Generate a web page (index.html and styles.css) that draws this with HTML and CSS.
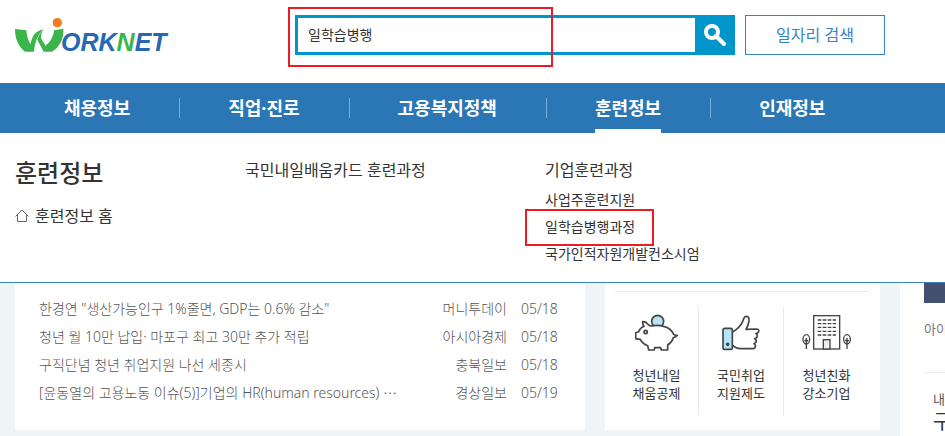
FILE: index.html
```html
<!DOCTYPE html>
<html lang="ko">
<head>
    <meta charset="UTF-8">
    <meta name="viewport" content="width=device-width, initial-scale=1.0">
    <title>WORKNET</title>
    <link rel="stylesheet" href="styles.css">
</head>
<body>
    <header class="header">
        <a href="#" class="logo" aria-label="WORKNET">
            <svg class="logo-mark" viewBox="45 51 147 105" aria-hidden="true">
                <path fill="#3ab54a" d="M45 87L79 91C81 112 86 124 92 133C94 112 106 92 131 88C114 102 104 128 102 155H75C56 140 45 118 45 87Z"/>
                <path fill="#3ab54a" d="M130 92C124 100 122 108 124 116L137 137C151 125 161 110 162 91L190 86C192 115 180 140 156 155H131L112 119C115 107 121 97 130 92Z"/>
                <circle cx="172" cy="68" r="14" fill="#f47b20"/>
            </svg>
            <span class="logo-text">ORK<span class="logo-green">N</span>ET</span>
        </a>
        <form class="search">
            <input type="text" class="search-input" value="일학습병행" aria-label="검색어">
            <button type="submit" class="search-btn" aria-label="검색">
                <svg viewBox="0 0 24 24" width="24" height="24" fill="none" stroke="#fff">
                    <circle cx="9" cy="9" r="6" stroke-width="4"/>
                    <path d="M13 13L21 21" stroke-width="4" stroke-linecap="round"/>
                </svg>
            </button>
            <span class="mark mark-search"></span>
        </form>
        <button type="button" class="job-btn">일자리 검색</button>
    </header>

    <nav class="nav">
        <ul class="nav-list">
            <li><a href="#">채용정보</a></li>
            <li><a href="#">직업·진로</a></li>
            <li><a href="#">고용복지정책</a></li>
            <li><a href="#" class="active">훈련정보</a></li>
            <li><a href="#">인재정보</a></li>
        </ul>
    </nav>

    <section class="submenu">
        <div class="submenu-title">
            <h2>훈련정보</h2>
            <a href="#" class="home-link">
                <svg viewBox="0 0 14 14" width="14" height="14" fill="none" stroke="#666">
                    <path d="M0.500 7.500L7 1L13.500 7.500M2.500 6V12.500H11.500V6"/>
                </svg>
                훈련정보 홈
            </a>
        </div>
        <div class="submenu-col">
            <h3><a href="#">국민내일배움카드 훈련과정</a></h3>
        </div>
        <div class="submenu-col">
            <h3><a href="#">기업훈련과정</a></h3>
            <ul>
                <li><a href="#">사업주훈련지원</a></li>
                <li class="marked"><a href="#">일학습병행과정</a><span class="mark mark-link"></span></li>
                <li><a href="#">국가인적자원개발컨소시엄</a></li>
            </ul>
        </div>
    </section>

    <main class="content">
        <div class="board">
            <ul class="card news">
                <li>
                    <a href="#">한경연 "생산가능인구 1%줄면, GDP는 0.6% 감소"</a>
                    <span class="source">머니투데이</span>
                    <span class="date">05/18</span>
                </li>
                <li>
                    <a href="#">청년 월 10만 납입· 마포구 최고 30만 추가 적립</a>
                    <span class="source">아시아경제</span>
                    <span class="date">05/18</span>
                </li>
                <li>
                    <a href="#">구직단념 청년 취업지원 나선 세종시</a>
                    <span class="source">충북일보</span>
                    <span class="date">05/18</span>
                </li>
                <li>
                    <a href="#">[윤동열의 고용노동 이슈(5)]기업의 HR(human resources) ⋯</a>
                    <span class="source">경상일보</span>
                    <span class="date">05/19</span>
                </li>
            </ul>

            <div class="card services">
                <ul class="service-list">
                    <li>
                        <a href="#">
                            <svg viewBox="30 27 132 114" width="44" height="38" fill="none" stroke="#444" stroke-width="5" stroke-linejoin="round">
                                <circle cx="98" cy="49" r="18" fill="#b3e5fc"/>
                                <path fill="#fff" d="M53 50C59 49 66 54 70 59Q75 63 80 63Q97 59 116 64Q138 69 146 88Q152 92 157 91Q153 97 145 98Q141 112 128 120V135H109L107 128H89L88 135H71L68 122Q51 115 46 103L32 101V83L41 80Q46 68 57 64Q52 57 53 50Z"/>
                                <circle cx="62" cy="81" r="5"/>
                            </svg>
                            <span>청년내일<br>채움공제</span>
                        </a>
                    </li>
                    <li>
                        <a href="#">
                            <svg viewBox="26 27 132 114" width="44" height="38" fill="none" stroke="#444" stroke-width="5" stroke-linejoin="round">
                                <rect x="38" y="70" width="28" height="63" rx="5" fill="#b3e5fc"/>
                                <circle cx="52" cy="118" r="3" fill="#444"/>
                                <path d="M67 81Q88 69 97 50Q101 34 108 34Q117 34 116 48Q114 61 107 73L139 72Q147 73 145 80Q143 85 137 86Q143 90 140 96Q137 101 133 101Q140 106 137 111Q134 115 131 116Q137 120 135 125Q134 131 127 131H92Q75 131 67 121"/>
                            </svg>
                            <span>국민취업<br>지원제도</span>
                        </a>
                    </li>
                    <li>
                        <a href="#">
                            <svg viewBox="22 27 150 114" width="50" height="38" fill="none" stroke="#444" stroke-width="4">
                                <rect x="57" y="32" width="78" height="100"/>
                                <path stroke-dasharray="11 4" d="M69 45H124M69 56H124M69 67H124M69 79H124M69 90H124"/>
                                <rect x="86" y="104" width="20" height="28" fill="#eee"/>
                                <ellipse cx="35" cy="103" rx="10" ry="14"/>
                                <path d="M35 99V132M35 110L40 105M35 110L30 105"/>
                                <ellipse cx="157" cy="103" rx="10" ry="14"/>
                                <path d="M157 99V132M157 110L162 105M157 110L152 105"/>
                            </svg>
                            <span>청년친화<br>강소기업</span>
                        </a>
                    </li>
                </ul>
            </div>
        </div>

        <aside class="side">
            <div class="side-tab"></div>
            <p class="side-id">아이</p>
            <div class="side-info">
                <p>내</p>
                <strong>구</strong>
            </div>
        </aside>
    </main>
</body>
</html>
```

FILE: styles.css
```css
* {
    margin: 0;
    padding: 0;
    box-sizing: border-box;
}

body {
    height: 100vh;
    overflow: hidden;
    background: #fff;
    color: #333;
    font-family: "Noto Sans", "Noto Sans CJK KR", sans-serif;
    font-size: 14px;
}

ul {
    list-style: none;
}

a {
    color: inherit;
    text-decoration: none;
}

svg {
    display: block;
}

input,
button {
    font-family: inherit;
}

/* header */
.header {
    display: flex;
    padding: 15px 15px 28px;
}

.logo {
    display: flex;
    align-items: flex-end;
    width: 280px;
    height: 40px;
    padding-bottom: 3px;
}

.logo-mark {
    width: 49px;
    height: 35px;
}

.logo-text {
    margin-left: -3px;
    font-family: "Liberation Sans", Arial, sans-serif;
    font-size: 25px;
    font-weight: bold;
    font-style: italic;
    line-height: 20px;
    color: #2768b2;
}

.logo-green {
    color: #3ab54a;
}

.search {
    position: relative;
    display: flex;
    flex: 1;
    max-width: 440px;
    height: 40px;
}

.search-input {
    flex: 1;
    min-width: 0;
    padding: 0 10px 2px;
    border: 3px solid #0096cc;
    border-right: none;
    outline: none;
    font-size: 14px;
    color: #333;
}

.search-btn {
    display: flex;
    align-items: center;
    justify-content: center;
    width: 40px;
    border: none;
    background: #0096cc;
    cursor: pointer;
}

.job-btn {
    width: 140px;
    height: 40px;
    margin-left: 10px;
    padding-bottom: 2px;
    border: 1px solid #3683c4;
    background: #fff;
    font-size: 16px;
    color: #3683c4;
    cursor: pointer;
}

/* red marker boxes */
.mark {
    position: absolute;
    border: 2px solid #ed1c24;
    pointer-events: none;
}

.mark-search {
    top: -8px;
    left: -7px;
    width: 265px;
    height: 60px;
}

.mark-link {
    top: -4px;
    left: -20px;
    width: 129px;
    height: 37px;
}

/* main menu */
.nav {
    padding-left: 15px;
    background: #2b76b5;
}

.nav-list {
    display: flex;
}

.nav-list li {
    display: flex;
    align-items: center;
    padding: 0 49px;
}

.nav-list li + li {
    background: linear-gradient(#7badd6, #7badd6) no-repeat left center / 1px 20px;
}

.nav-list a {
    height: 50px;
    border-bottom: 4px solid transparent;
    font-size: 18px;
    font-weight: bold;
    line-height: 50px;
    color: #fff;
}

.nav-list a.active {
    border-bottom-color: #fff;
}

/* sub menu */
.submenu {
    display: grid;
    grid-template-columns: 230px 300px 1fr;
    padding: 23px 15px 15px;
    border-bottom: 1px solid #3683c4;
}

.submenu h2 {
    font-size: 24px;
    font-weight: 500;
    line-height: 34px;
}

.submenu h3 {
    margin-bottom: 2px;
    font-size: 16px;
    font-weight: 400;
    line-height: 28px;
}

.submenu li {
    line-height: 27px;
}

.marked {
    position: relative;
}

.home-link {
    display: flex;
    align-items: center;
    gap: 6px;
    margin-top: 14px;
    font-size: 16px;
    line-height: 24px;
}

/* content */
.content {
    display: flex;
}

.board {
    display: flex;
    flex: 1;
    gap: 20px;
    min-width: 0;
    padding: 0 20px 20px 15px;
    background: #eff4f7;
}

.card {
    background: #fff;
}

.news {
    flex: 1;
    min-width: 0;
    padding: 12px 24px 23px;
    color: #555;
    font-weight: 300;
}

.news li {
    display: flex;
    line-height: 28px;
}

.news a {
    flex: 1;
    white-space: nowrap;
}

.date {
    width: 40px;
    margin-left: 14px;
}

.services {
    width: 275px;
    padding: 8px 11px 15px 10px;
}

.service-list {
    display: grid;
    grid-template-columns: 83px 85px 1fr;
    padding-top: 15px;
    border-top: 1px solid #eaeaea;
}

.service-list li + li {
    border-left: 1px solid #eaeaea;
}

.service-list a {
    display: flex;
    flex-direction: column;
    align-items: center;
    gap: 14px;
    padding: 7px 0 13px;
    font-size: 13px;
    line-height: 18px;
}

.side {
    width: 45px;
    padding-left: 24px;
    overflow: hidden;
    white-space: nowrap;
}

.side-tab {
    height: 20px;
    background: #43506e;
}

.side-id {
    height: 70px;
    padding-top: 16px;
    border-bottom: 1px solid #eaeaea;
    font-size: 13px;
    line-height: 20px;
    color: #777;
}

.side-info {
    padding: 16px 0 0 9px;
    line-height: 20px;
}

.side-info p {
    font-size: 13px;
    color: #555;
}

.side-info strong {
    display: block;
    font-size: 20px;
    font-weight: 400;
    line-height: 26px;
}
```
